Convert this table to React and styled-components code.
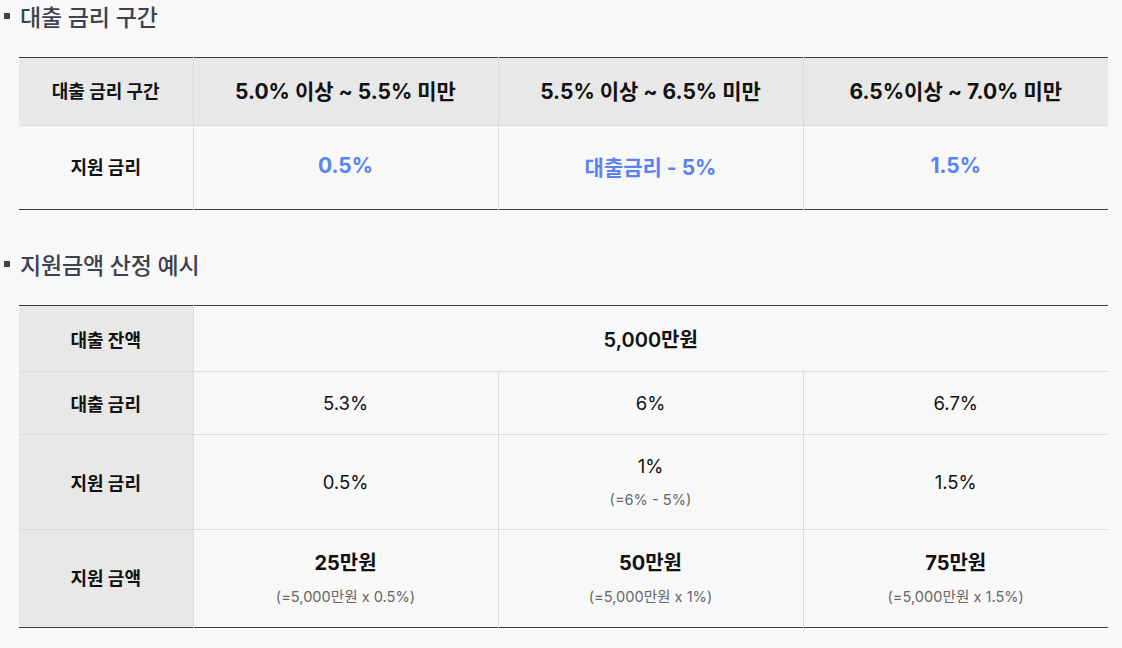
import React from "react";
import styled, { createGlobalStyle } from "styled-components";

const Global = createGlobalStyle`
  html, body { margin: 0; padding: 0; background: #f8f8f8; }
  body { font-family: Inter, "Noto Sans CJK KR", sans-serif; color: #111; }
`;

const Page = styled.div`
  width: 1122px;
  height: 648px;
  box-sizing: border-box;
  padding: 4px 0 0 0;
  overflow: hidden;
`;

const Heading = styled.h3`
  margin: ${(p) => p.$top}px 0 0 0;
  display: flex;
  align-items: center;
  box-sizing: border-box;
  height: 28px;
  padding-bottom: 4px;
  font-size: 23px;
  font-weight: 500;
  color: #3d4250;
  letter-spacing: -0.2px;
  &::before {
    content: "";
    width: 6px;
    height: 6px;
    background: #3a3f4c;
    margin: 0 10px 0 4px;
  }
`;

const Table = styled.table`
  margin: 25px 0 0 19px;
  width: 1089px;
  border-collapse: collapse;
  table-layout: fixed;
  border-top: 1px solid #3a3d44;
  border-bottom: 1px solid #3a3d44;
`;

const Row = styled.tr`
  height: ${(p) => p.$h}px;
  & > td {
    padding-bottom: ${(p) => p.$lift || 0}px;
  }
`;

const Cell = styled.td`
  border: 1px solid #dcdcdc;
  border-top: none;
  text-align: center;
  vertical-align: middle;
  padding: 0;
  background: ${(p) => (p.$head ? "#e8e8e8" : "transparent")};
  font-size: ${(p) => p.$size || 18.5}px;
  font-weight: ${(p) => p.$weight || 400};
  color: ${(p) => p.$color || "#111"};
  &:first-child { border-left: none; }
  &:last-child { border-right: none; }
  tr:last-child > & { border-bottom: none; }
`;

const Label = styled(Cell)`
  font-size: 18px;
  font-weight: 700;
`;

const Sub = styled.div`
  margin-top: ${(p) => p.$gap || 11}px;
  font-size: 14.6px;
  font-weight: 400;
  color: #666;
`;

const BLUE = "#5b82f2";

export default function App() {
  return (
    <Page>
      <Global />
      <Heading $top={0}>대출 금리 구간</Heading>
      <Table>
        <colgroup>
          <col style={{ width: 174 }} />
          <col />
          <col />
          <col />
        </colgroup>
        <tbody>
          <Row $h={68} $lift={4}>
            <Label $head>대출 금리 구간</Label>
            <Cell $head $weight={700} $size={21}>5.0% 이상 ~ 5.5% 미만</Cell>
            <Cell $head $weight={700} $size={21}>5.5% 이상 ~ 6.5% 미만</Cell>
            <Cell $head $weight={700} $size={21}>6.5%이상 ~ 7.0% 미만</Cell>
          </Row>
          <Row $h={84} $lift={4}>
            <Label>지원 금리</Label>
            <Cell $weight={700} $size={21} $color={BLUE}>0.5%</Cell>
            <Cell $weight={700} $size={21} $color={BLUE}>대출금리 - 5%</Cell>
            <Cell $weight={700} $size={21} $color={BLUE}>1.5%</Cell>
          </Row>
        </tbody>
      </Table>

      <Heading $top={42}>지원금액 산정 예시</Heading>
      <Table>
        <colgroup>
          <col style={{ width: 174 }} />
          <col />
          <col />
          <col />
        </colgroup>
        <tbody>
          <Row $h={66}>
            <Label $head>대출 잔액</Label>
            <Cell colSpan={3} $weight={600} $size={20}>5,000만원</Cell>
          </Row>
          <Row $h={63}>
            <Label $head>대출 금리</Label>
            <Cell>5.3%</Cell>
            <Cell>6%</Cell>
            <Cell>6.7%</Cell>
          </Row>
          <Row $h={95}>
            <Label $head>지원 금리</Label>
            <Cell>0.5%</Cell>
            <Cell>
              1%
              <Sub $gap={14}>(=6% - 5%)</Sub>
            </Cell>
            <Cell>1.5%</Cell>
          </Row>
          <Row $h={98} $lift={4}>
            <Label $head>지원 금액</Label>
            <Cell $weight={700} $size={20}>
              25만원
              <Sub $gap={9}>(=5,000만원 x 0.5%)</Sub>
            </Cell>
            <Cell $weight={700} $size={20}>
              50만원
              <Sub $gap={9}>(=5,000만원 x 1%)</Sub>
            </Cell>
            <Cell $weight={700} $size={20}>
              75만원
              <Sub $gap={9}>(=5,000만원 x 1.5%)</Sub>
            </Cell>
          </Row>
        </tbody>
      </Table>
    </Page>
  );
}
